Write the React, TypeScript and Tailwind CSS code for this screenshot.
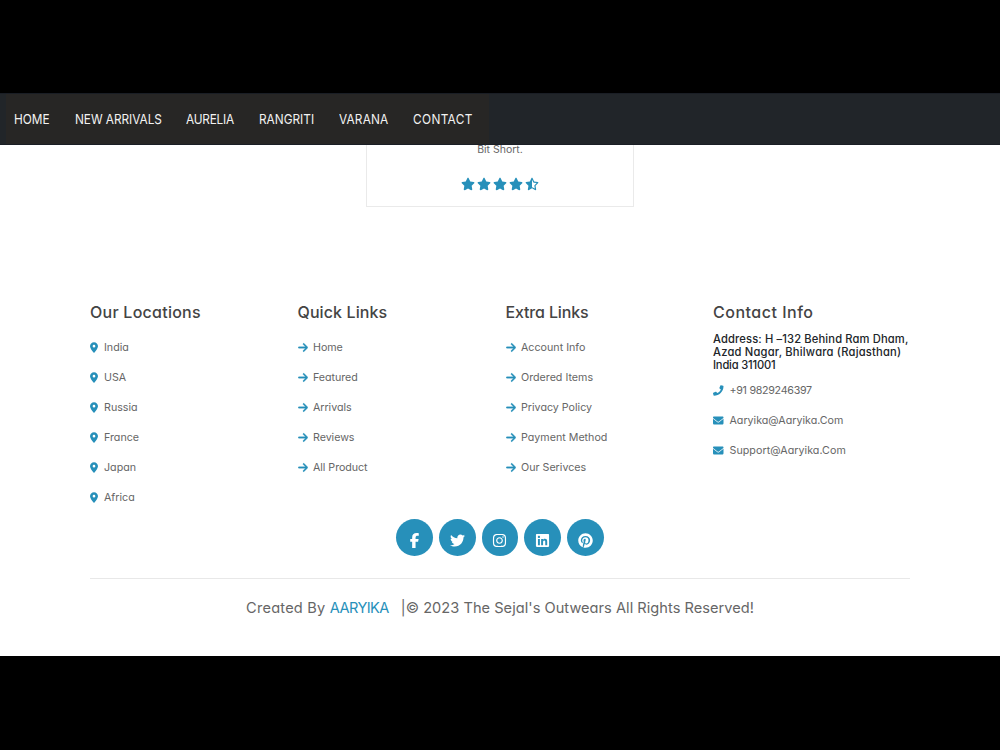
import type { IconType } from "react-icons";
import { FaArrowRight, FaEnvelope, FaFacebookF, FaInstagram, FaLinkedin, FaLocationDot, FaPinterest, FaRegStarHalfStroke, FaStar, FaTwitter } from "react-icons/fa6";
import { FaPhone } from "react-icons/fa";

const nav = [
  { label: "HOME", box: "w-[60.5px]" },
  { label: "NEW ARRIVALS", box: "w-[111.5px] tracking-[-0.05px]" },
  { label: "AURELIA", box: "w-[72.5px] tracking-[-0.25px]" },
  { label: "RANGRITI", box: "w-[80px]" },
  { label: "VARANA", box: "w-[74.5px] tracking-[0.2px]" },
  { label: "CONTACT", box: "w-[70px] tracking-[0.4px]" },
];
const locations = ["India", "USA", "Russia", "France", "Japan", "Africa"];
const quick = ["Home", "Featured", "Arrivals", "Reviews", "All Product"];
const extra = ["Account Info", "Ordered Items", "Privacy Policy", "Payment Method", "Our Serivces"];
const socials: IconType[] = [FaFacebookF, FaTwitter, FaInstagram, FaLinkedin, FaPinterest];

function Heading({ children, spacing }: { children: string; spacing: string }) {
  return <h3 className={`h-6 text-[16px] leading-6 font-medium text-[#444] ${spacing}`}>{children}</h3>;
}

function Row({ icon: Icon, label, iconClass, textClass = "" }: { icon: IconType; label: string; iconClass: string; textClass?: string }) {
  return (
    <li className="flex h-[30px] items-center text-[10.7px] leading-4 text-[#666]">
      <Icon className={`h-[11px] shrink-0 text-[#2790ba] ${iconClass}`} />
      <span className={`pt-px ${textClass}`}>{label}</span>
    </li>
  );
}

export default function App() {
  return (
    <div className="flex h-[750px] w-[1000px] flex-col overflow-hidden bg-black font-[Inter,sans-serif] whitespace-nowrap [font-feature-settings:'cv11']">
      <div className="h-[93px] shrink-0" />
      <nav className="flex h-[52px] shrink-0 items-center border-y border-[#1a1e25] bg-[#212529] pl-[6px]">
        <ul className="flex h-full w-[483px] items-center bg-[#272625] pl-2 text-[13.6px] text-[#f2f2f2]">
          {nav.map((n) => (
            <li key={n.label} className={n.box}>
              <span className="inline-block origin-left scale-x-[0.87]">{n.label}</span>
            </li>
          ))}
        </ul>
      </nav>
      <main className="h-[511px] shrink-0 bg-white">
        <section className="mx-auto flex h-[62px] w-[268px] flex-col items-center border border-t-0 border-[#eaeaea]">
          <p className="h-[9px] text-[10.5px] leading-[9px] text-[#666]">Bit Short.</p>
          <div className="mt-[23px] flex gap-[2px] text-[14px] text-[#2790ba]">
            <FaStar />
            <FaStar />
            <FaStar />
            <FaStar />
            <FaRegStarHalfStroke />
          </div>
        </section>
        <footer className="mx-[90px] pt-[93px]">
          <div className="grid h-[212px] grid-cols-[207.5px_208px_207.5px_197px]">
            <div>
              <Heading spacing="tracking-[0.25px]">Our Locations</Heading>
              <ul className="mt-2">
                {locations.map((l) => <Row key={l} icon={FaLocationDot} label={l} iconClass="w-2 mr-[6px]" />)}
              </ul>
            </div>
            <div>
              <Heading spacing="tracking-[0.1px]">Quick Links</Heading>
              <ul className="mt-2">
                {quick.map((l) => <Row key={l} icon={FaArrowRight} label={l} iconClass="w-[10px] mr-[5.5px] stroke-[16px]" textClass="tracking-[-0.05px]" />)}
              </ul>
            </div>
            <div>
              <Heading spacing="tracking-[-0.15px]">Extra Links</Heading>
              <ul className="mt-2">
                {extra.map((l) => <Row key={l} icon={FaArrowRight} label={l} iconClass="w-[10px] mr-[5.5px] stroke-[16px]" />)}
              </ul>
            </div>
            <div>
              <Heading spacing="tracking-[0.5px]">Contact Info</Heading>
              <p className="mt-[9px] text-[11.2px] leading-[13.2px] font-medium text-[#212529]">
                <span className="tracking-[0.13px]">Address: H –132 Behind Ram Dham,</span><br />
                <span className="tracking-[0.2px]">Azad Nagar, Bhilwara (Rajasthan)</span><br />
                <span className="tracking-[-0.2px]">India 311001</span>
              </p>
              <ul className="mt-[3px]">
                <Row icon={FaPhone} label="+91 9829246397" iconClass="w-[10.5px] mr-[6px]" textClass="tracking-[-0.29px]" />
                <Row icon={FaEnvelope} label="Aaryika@Aaryika.Com" iconClass="w-[10.5px] mr-[6px]" />
                <Row icon={FaEnvelope} label="Support@Aaryika.Com" iconClass="w-[10.5px] mr-[6px]" textClass="tracking-[0.05px]" />
              </ul>
            </div>
          </div>
          <div className="mt-[7px] flex justify-center gap-[6px]">
            {socials.map((Icon, i) => (
              <span key={i} className="flex size-[36.8px] items-center justify-center rounded-full bg-[#2790ba] pt-[6px] text-[15px] text-white">
                <Icon />
              </span>
            ))}
          </div>
          <p className="mt-[22px] flex justify-center border-t border-[#e8e8e8] pt-[17px] text-[14.6px] leading-6 text-[#666]">
            <span className="tracking-[0.22px]">Created By <span className="tracking-[-0.6px] text-[#2790ba]">AARYIKA</span></span>
            <span className="ml-[12px] tracking-[0.03px]">|© 2023 The Sejal's Outwears All Rights Reserved!</span>
          </p>
        </footer>
      </main>
    </div>
  );
}
